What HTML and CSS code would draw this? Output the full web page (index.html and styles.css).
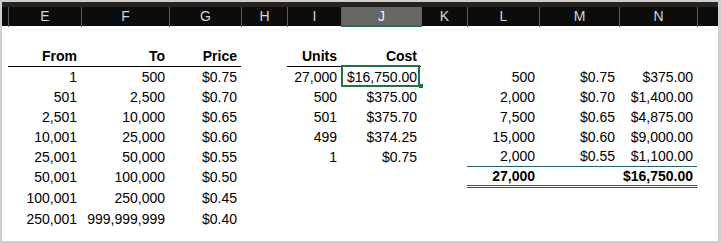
FILE: index.html
```html
<!DOCTYPE html>
<html>
<head>
<meta charset="utf-8">
<link rel="stylesheet" href="styles.css">
</head>
<body>
<div class="frame">
  <div class="topbar"></div>
  <div class="colhdr">
    <div class="h corner"></div>
    <div class="h">E</div>
    <div class="h">F</div>
    <div class="h">G</div>
    <div class="h">H</div>
    <div class="h">I</div>
    <div class="h sel">J</div>
    <div class="h">K</div>
    <div class="h">L</div>
    <div class="h">M</div>
    <div class="h">N</div>
    <div class="h"></div>
  </div>
  <div class="sheet">
    <div class="row"></div>
    <div class="row hdr">
      <div class="c ce b ul">From</div>
      <div class="c cf b ul">To</div>
      <div class="c cg b ul">Price</div>
      <div class="c ci b ul">Units</div>
      <div class="c cj b ul">Cost</div>
    </div>
    <div class="row">
      <div class="c ce">1</div><div class="c cf">500</div><div class="c cg">$0.75</div>
      <div class="c ci">27,000</div><div class="c cj active">$16,750.00</div>
      <div class="c cl">500</div><div class="c cm">$0.75</div><div class="c cn">$375.00</div>
    </div>
    <div class="row">
      <div class="c ce">501</div><div class="c cf">2,500</div><div class="c cg">$0.70</div>
      <div class="c ci">500</div><div class="c cj">$375.00</div>
      <div class="c cl">2,000</div><div class="c cm">$0.70</div><div class="c cn">$1,400.00</div>
    </div>
    <div class="row">
      <div class="c ce">2,501</div><div class="c cf">10,000</div><div class="c cg">$0.65</div>
      <div class="c ci">501</div><div class="c cj">$375.70</div>
      <div class="c cl">7,500</div><div class="c cm">$0.65</div><div class="c cn">$4,875.00</div>
    </div>
    <div class="row">
      <div class="c ce">10,001</div><div class="c cf">25,000</div><div class="c cg">$0.60</div>
      <div class="c ci">499</div><div class="c cj">$374.25</div>
      <div class="c cl">15,000</div><div class="c cm">$0.60</div><div class="c cn">$9,000.00</div>
    </div>
    <div class="row">
      <div class="c ce">25,001</div><div class="c cf">50,000</div><div class="c cg">$0.55</div>
      <div class="c ci">1</div><div class="c cj">$0.75</div>
      <div class="c cl bl">2,000</div><div class="c cm bl">$0.55</div><div class="c cn bl">$1,100.00</div>
    </div>
    <div class="row tall">
      <div class="c ce">50,001</div><div class="c cf">100,000</div><div class="c cg">$0.50</div>
      <div class="c cl b dbl">27,000</div><div class="c cm dbl"></div><div class="c cn b dbl">$16,750.00</div>
    </div>
    <div class="row tall">
      <div class="c ce">100,001</div><div class="c cf">250,000</div><div class="c cg">$0.45</div>
    </div>
    <div class="row">
      <div class="c ce">250,001</div><div class="c cf">999,999,999</div><div class="c cg">$0.40</div>
    </div>
  </div>
</div>
</body>
</html>
```
FILE: styles.css
```css
html, body {
  margin: 0;
  padding: 0;
  background: #ffffff;
}
.frame {
  width: 721px;
  height: 243px;
  box-sizing: border-box;
  border: 2px solid #cfcfcf;
  border-right-width: 3px;
  background: #ffffff;
  font-family: "Liberation Sans", Arial, sans-serif;
  font-size: 14px;
  color: #000000;
  overflow: hidden;
}
.topbar {
  height: 5px;
  background: #27221e;
}
.colhdr, .row {
  display: grid;
  grid-template-columns: 6px 73px 88px 72px 46px 54px 80px 46px 72px 80px 78px 21px;
}
.colhdr {
  height: 19px;
  background: #0c0c0c;
}
.h {
  border-left: 1px solid #5c5c5c;
  color: #d6d6d6;
  text-align: center;
  line-height: 19px;
  font-size: 14px;
  box-sizing: border-box;
}
.h.corner {
  border-left: 0;
}
.h.sel {
  background: #676767;
  color: #f2f2f2;
  border-bottom: 2px solid #217346;
  line-height: 18px;
}
.row {
  height: 20px;
}
.row.hdr {
  height: 21px;
}
.row.tall {
  height: 21px;
}
.c {
  grid-row: 1;
  text-align: right;
  padding-right: 4px;
  line-height: 20px;
  white-space: nowrap;
  box-sizing: border-box;
}
.ce { grid-column: 2; }
.cf { grid-column: 3; }
.cg { grid-column: 4; }
.ci { grid-column: 6; }
.cj { grid-column: 7; }
.cl { grid-column: 9; }
.cm { grid-column: 10; }
.cn { grid-column: 11; }
.b { font-weight: bold; }
.ul {
  border-bottom: 1px solid #000000;
}
.bl {
  border-bottom: 1px solid #26607f;
  line-height: 19px;
}
.dbl {
  border-bottom: 3px double #26607f;
  line-height: 18px;
}
.active {
  position: relative;
}
.active::after {
  content: "";
  position: absolute;
  top: -2px;
  left: 0;
  right: 1px;
  bottom: 0;
  border: 2px solid #217346;
}
.active::before {
  content: "";
  position: absolute;
  right: -2px;
  bottom: -1px;
  width: 4px;
  height: 4px;
  background: #217346;
  z-index: 1;
}
```
